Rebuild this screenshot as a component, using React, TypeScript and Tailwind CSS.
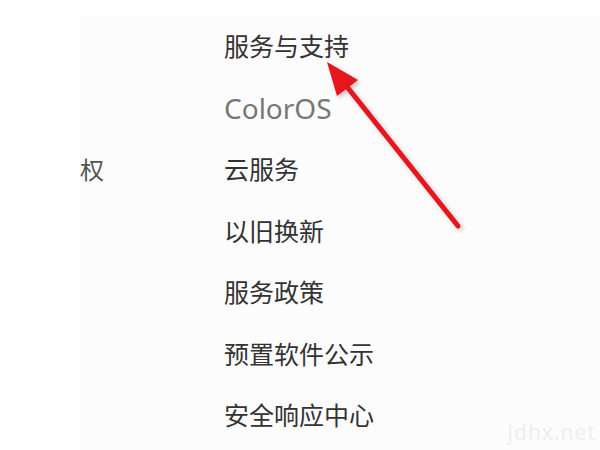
import React from "react";

const items = ["服务与支持", "ColorOS", "云服务", "以旧换新", "服务政策", "预置软件公示", "安全响应中心"];

export default function App() {
  return (
    <div
      className="relative w-[600px] h-[450px] overflow-hidden bg-white"
      style={{ fontFamily: '"Noto Sans", "Noto Sans CJK SC", sans-serif' }}
    >
      <div className="flex h-full pt-[16px]">
        <div className="w-[80px] shrink-0" />
        <div className="flex flex-1 bg-[#fcfcfc]">
          <div className="w-[144px] shrink-0">
            <div className="h-[61.5px]" />
            <div className="h-[61.5px]" />
            <div className="h-[61.5px] flex items-center text-[24px] text-[#555]">权</div>
          </div>
          <div className="flex flex-col">
            {items.map((t) => (
              <div
                key={t}
                className={
                  t === "ColorOS"
                    ? "h-[61.5px] flex items-center text-[28px] text-[#777]"
                    : "h-[61.5px] flex items-center text-[25px] text-[#333]"
                }
              >
                {t}
              </div>
            ))}
          </div>
        </div>
      </div>

      <svg className="absolute left-0 top-0" width="600" height="450" viewBox="0 0 600 450">
        <defs>
          <filter id="sh" x="-20%" y="-20%" width="140%" height="140%">
            <feDropShadow dx="2" dy="2" stdDeviation="2" floodColor="#000" floodOpacity="0.25" />
          </filter>
        </defs>
        <g filter="url(#sh)">
          <line x1="458" y1="226" x2="344" y2="83" stroke="#e5121a" strokeWidth="5" strokeLinecap="round" />
          <polygon points="327,62 358,80 337,96" fill="#e5121a" />
        </g>
      </svg>

      <div className="absolute right-[4px] bottom-[2px] text-[21px] text-[#efefef] tracking-[1px]">jdhx.net</div>
    </div>
  );
}
